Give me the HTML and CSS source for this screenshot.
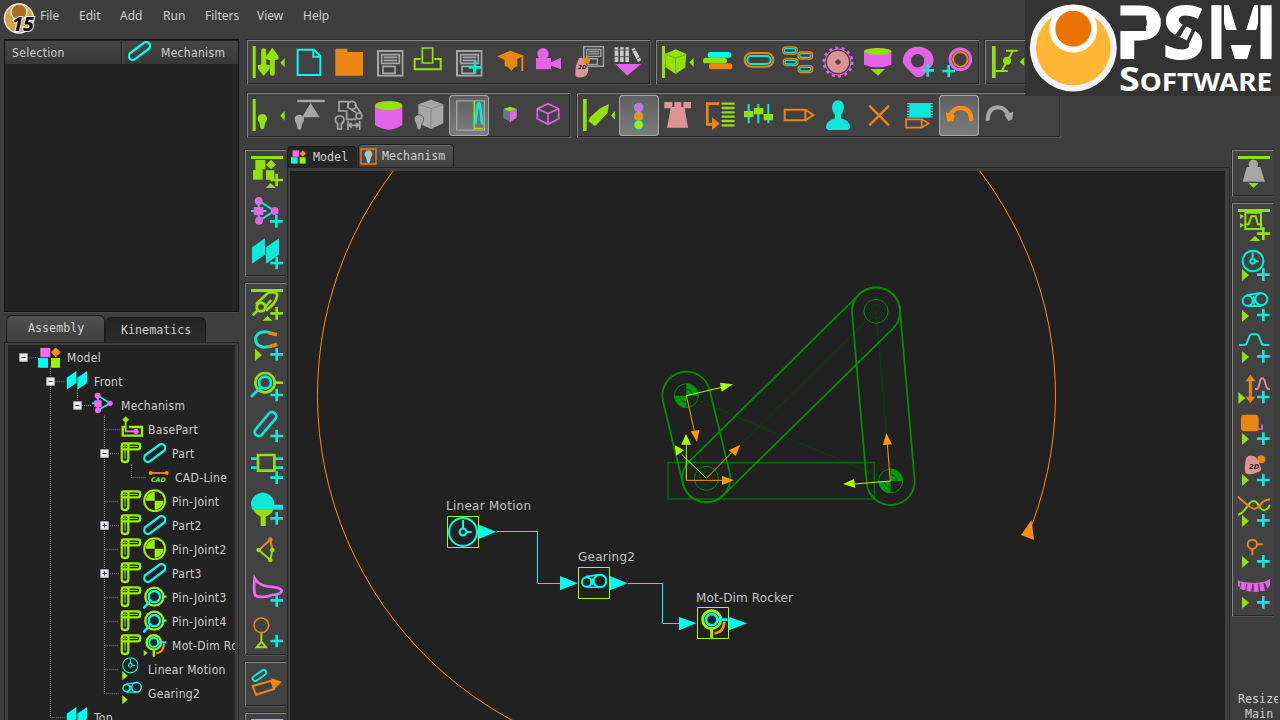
FILE: index.html
```html
<!DOCTYPE html>
<html lang="en">
<head>
<meta charset="utf-8">
<title>Mechanism</title>
<link rel="stylesheet" href="styles.css">
</head>
<body>
<svg class="defs" aria-hidden="true">
  <symbol id="plus" viewBox="-20 -20 40 40"><path class="sc" stroke-width="8" d="M-19 0H19M0-19V19"/></symbol>
  <symbol id="save" viewBox="0 0 80 80"><path class="sa" stroke-width="6" d="M3 3H77V77H3Z"/><path class="sa" stroke-width="5" d="M14 14H67V40H14ZM20 22H61M20 31H61M18 49H54V70H18Z"/></symbol>
  <symbol id="bulb" viewBox="0 0 30 48"><path class="fcur" d="M15 1A14 14 0 0 1 25 25Q22 30 21 42Q15 51 9 42Q8 30 5 25A14 14 0 0 1 15 1Z"/></symbol>
  <symbol id="planes" viewBox="0 0 64 60"><path class="fC" d="M1 22L30 2V38L1 58ZM33 22L62 2V38L33 58Z"/></symbol>
  <symbol id="fork" viewBox="0 0 64 64"><path class="sG" stroke-width="7" d="M10 4H52Q60 4 60 13Q60 22 52 22H24V50Q24 60 14 60Q4 60 4 50V12Q4 4 10 4ZM4 22H24M24 4V22"/><path class="sG" stroke-width="3" d="M8 13H52M14 8V50"/></symbol>
  <symbol id="part" viewBox="0 0 68 60"><rect class="sC" stroke-width="7" x="-3" y="18.500" width="74" height="23" rx="11.500" transform="rotate(-37 34 30)"/></symbol>
  <symbol id="pin" viewBox="0 0 70 70"><circle class="sG" stroke-width="6" cx="35" cy="35" r="31.500"/><path class="fG" d="M35 35V8A27 27 0 0 0 8 35ZM35 35V62A27 27 0 0 0 62 35Z"/></symbol>
  <symbol id="joint" viewBox="0 0 72 72"><circle class="sG" stroke-width="7" cx="35" cy="33" r="27"/><path class="sG" stroke-width="7" d="M62 33H72"/><circle class="sC" stroke-width="7" cx="35" cy="33" r="17"/><path class="sC" stroke-width="7" d="M23 46L2 68"/></symbol>
  <symbol id="clock" viewBox="0 0 90 90"><circle class="sC" stroke-width="6" cx="45" cy="45" r="41"/><path class="sC" stroke-width="6" d="M45 10V36M55 45H70"/><circle class="sC" stroke-width="6" cx="45" cy="45" r="10"/></symbol>
  <symbol id="gears" viewBox="0 0 80 44"><circle class="sC" stroke-width="6" cx="18" cy="25" r="14"/><circle class="sC" stroke-width="6" cx="58" cy="22" r="19"/><path class="sC" stroke-width="5" d="M16 9L56 3M18 41H58M34 15Q39 23 34 34"/></symbol>
  <symbol id="minus" viewBox="0 0 27 27"><path fill="#f2f2f2" stroke="#aaa" stroke-width="3" d="M2 2H25V25H2Z"/><path stroke="#446" stroke-width="3" d="M7 13.500H20"/></symbol>
  <symbol id="expand" viewBox="0 0 27 27"><path fill="#f2f2f2" stroke="#aaa" stroke-width="3" d="M2 2H25V25H2Z"/><path stroke="#347" stroke-width="3" d="M7 13.500H20M13.500 7V20"/></symbol>
  <symbol id="blocks" viewBox="0 0 68 62"><path class="fM" d="M7 1H37V30H7Z"/><path class="fC" d="M0 32H30V61H0Z"/><path class="fG" d="M39 32H66V61H39Z"/><path class="fO" d="M53 0L68 15L53 30L39 15Z"/></symbol>
  <symbol id="motdim" viewBox="0 0 80 90"><path class="sO" stroke-width="8" d="M71 40Q70 72 42 75"/><path class="sG" stroke-width="9" d="M33 60V88"/><circle class="sG" stroke-width="9" cx="33" cy="34" r="27"/><circle class="sC" stroke-width="8" cx="33" cy="34" r="17"/><path class="sC" stroke-width="8" d="M50 34H80"/></symbol>
  <symbol id="net" viewBox="0 0 96 86"><path class="sc" stroke-width="6" d="M0 43H46M23 12L71 43L24 72M23 12V72"/><path class="fm" d="M8 31H37V55H8Z"/><circle class="fm" cx="23" cy="13" r="12"/><circle class="fm" cx="71" cy="43" r="12"/><circle class="fm" cx="24" cy="72" r="12"/></symbol>
</svg>

<div class="app">
  <header class="menubar">
    <svg class="appicon" viewBox="0 0 34 36"><circle cx="17" cy="18.500" r="14.500" fill="#d2a23c" stroke="#eee9dc" stroke-width="1.500"/><circle cx="17" cy="12" r="8" fill="#b26c20" stroke="#f0e4cc" stroke-width="1.500"/><text x="10" y="31" class="ver" textLength="22" lengthAdjust="spacingAndGlyphs">15</text></svg>
    <nav><span class="m1">File</span><span class="m2">Edit</span><span class="m3">Add</span><span class="m4">Run</span><span class="m5">Filters</span><span class="m6">View</span><span class="m7">Help</span></nav>
  </header>

  <aside class="side">
    <section class="selection">
      <div class="selhead">
        <div class="cell">Selection</div>
        <div class="cell mech"><svg width="23" height="20"><use href="#part"/></svg><span>Mechanism</span></div>
      </div>
    </section>
    <div class="sidetabs"><div class="stab on">Assembly</div><div class="stab">Kinematics</div></div>
    <section class="treebox"><div class="tree">
      <div class="row"><svg width="59" height="24" viewBox="24 0 177 72"><path class="dot" d="M86 38H114M151 64V72"/><use href="#minus" x="57" y="24" width="27" height="27"/><use href="#blocks" x="114" y="7" width="68" height="62"/></svg>Model</div>
      <div class="row"><svg width="86" height="24" viewBox="24 0 258 72"><path class="dot" d="M151 0V72M166 38H196M232 64V72"/><use href="#minus" x="138" y="24" width="27" height="27"/><use href="#planes" x="199" y="4" width="64" height="60"/></svg>Front</div>
      <div class="row"><svg width="113" height="24" viewBox="24 0 339 72"><path class="dot" d="M151 0V72M232 0V24M246 38H276M313 68V72"/><use href="#minus" x="219" y="24" width="27" height="27"/><path class="sC" stroke-width="5" d="M276 31H300M294 8L330 31L294 52Z"/><path class="fM" d="M283 22H305V42H283Z"/><circle class="fM" cx="293" cy="8" r="9"/><circle class="fM" cx="330" cy="31" r="8"/><circle class="fM" cx="294" cy="52" r="9"/></svg>Mechanism</div>
      <div class="row"><svg width="140" height="24" viewBox="24 0 420 72"><path class="dot" d="M151 0V72M313 0V72M316 38H360"/><path class="sG" stroke-width="7" d="M377 30H368V56H426V30H388"/><path class="fG" d="M377-2L387 8L377 18L367 8Z"/><path class="sM" stroke-width="6" d="M376 43H404"/><circle class="fM" cx="408" cy="43" r="8"/><path class="sG" stroke-width="5" d="M377 10V44"/></svg>BasePart</div>
      <div class="row"><svg width="164" height="24" viewBox="24 0 492 72"><path class="dot" d="M151 0V72M313 0V72M330 38H358M394 70V72"/><use href="#minus" x="300" y="24" width="27" height="27"/><use href="#fork" x="361" y="3" width="64" height="64"/><use href="#part" x="430" y="6" width="68" height="60"/></svg>Part</div>
      <div class="row"><svg width="167" height="24" viewBox="24 0 501 72"><path class="dot" d="M151 0V72M313 0V72M394 0V38H440"/><path class="sO" stroke-width="5" d="M452 24H500"/><circle class="fO" cx="452" cy="24" r="6"/><circle class="fO" cx="500" cy="24" r="6"/><text class="cad" x="453" y="50" textLength="44" lengthAdjust="spacingAndGlyphs">CAD</text></svg>CAD-Line</div>
      <div class="row"><svg width="164" height="24" viewBox="24 0 492 72"><path class="dot" d="M151 0V72M313 0V72M316 38H358"/><use href="#fork" x="361" y="3" width="64" height="64"/><use href="#pin" x="429" y="0" width="70" height="70"/></svg>Pin-Joint</div>
      <div class="row"><svg width="164" height="24" viewBox="24 0 492 72"><path class="dot" d="M151 0V72M313 0V72M330 38H358"/><use href="#expand" x="300" y="24" width="27" height="27"/><use href="#fork" x="361" y="3" width="64" height="64"/><use href="#part" x="430" y="6" width="68" height="60"/></svg>Part2</div>
      <div class="row"><svg width="164" height="24" viewBox="24 0 492 72"><path class="dot" d="M151 0V72M313 0V72M316 38H358"/><use href="#fork" x="361" y="3" width="64" height="64"/><use href="#pin" x="429" y="0" width="70" height="70"/></svg>Pin-Joint2</div>
      <div class="row"><svg width="164" height="24" viewBox="24 0 492 72"><path class="dot" d="M151 0V72M313 0V72M330 38H358"/><use href="#expand" x="300" y="24" width="27" height="27"/><use href="#fork" x="361" y="3" width="64" height="64"/><use href="#part" x="430" y="6" width="68" height="60"/></svg>Part3</div>
      <div class="row"><svg width="164" height="24" viewBox="24 0 492 72"><path class="dot" d="M151 0V72M313 0V72M316 38H358"/><use href="#fork" x="361" y="3" width="64" height="64"/><use href="#joint" x="428" y="2" width="72" height="72"/></svg>Pin-Joint3</div>
      <div class="row"><svg width="164" height="24" viewBox="24 0 492 72"><path class="dot" d="M151 0V72M313 0V72M316 38H358"/><use href="#fork" x="361" y="3" width="64" height="64"/><use href="#joint" x="428" y="2" width="72" height="72"/></svg>Pin-Joint4</div>
      <div class="row"><svg width="164" height="24" viewBox="24 0 492 72"><path class="dot" d="M151 0V72M313 0V72M316 38H358"/><use href="#fork" x="361" y="3" width="64" height="64"/><use href="#motdim" x="434" y="1" width="66" height="72"/><path class="fG" d="M431 51L443 60L431 69Z"/></svg>Mot-Dim Rocker</div>
      <div class="row"><svg width="140" height="24" viewBox="24 0 420 72"><path class="dot" d="M151 0V72M313 0V72M316 38H358"/><use href="#clock" x="366" y="0" width="50" height="50"/><path class="fG" d="M367 42L383 56L367 70Z"/></svg>Linear Motion</div>
      <div class="row"><svg width="140" height="24" viewBox="24 0 420 72"><path class="dot" d="M151 0V72M313 0V38H358"/><use href="#gears" x="366" y="0" width="60" height="38"/><path class="fG" d="M367 42L383 56L367 70Z"/></svg>Gearing2</div>
      <div class="row"><svg width="86" height="24" viewBox="24 0 258 72"><path class="dot" d="M151 0V38H196"/><use href="#planes" x="199" y="4" width="64" height="60"/></svg>Top</div>
    </div></section>
  </aside>

  <main class="main">
    <div class="bar">
      <div class="group">
        <svg class="ic" viewBox="27 36 120 120"><path class="fg" d="M38 48H47V144H38Z"/><path class="sg" stroke-width="15" stroke-linecap="round" d="M71 62V115M97 75V130"/><path class="fg" d="M53 106Q71 100 90 106L89 116L71 138L54 116ZM78 88L79 78L97 53L115 78L116 88Q97 94 78 88ZM121 98L134 84V112Z"/></svg>
        <svg class="ic" viewBox="147 36 120 120"><path class="sC" stroke-width="6" d="M173 59H222L241 78V135H173ZM220 60V80H240"/></svg>
        <svg class="ic" viewBox="267 36 120 120"><path class="fo" d="M286 56H322V66H369V137H286Z"/></svg>
        <svg class="ic" viewBox="387 36 120 120"><use href="#save" x="411" y="60" width="80" height="80"/></svg>
        <svg class="ic" viewBox="507 36 120 120"><path class="sg" stroke-width="5" d="M547 54H578V99H547Z"/><path class="sg" stroke-width="6" d="M542 87H524V118H602V87H583"/></svg>
        <svg class="ic" viewBox="627 36 120 120"><use href="#save" x="648" y="60" width="80" height="80"/><use href="#plus" x="685" y="92" width="40" height="40"/></svg>
        <svg class="ic" viewBox="27 36 120 120"><path class="fo" d="M52 79L91 62L131 77L112 87V108Q100 112 94 123Q88 112 74 107V90Z"/><path class="so" stroke-width="6" d="M100 72L127 79V123"/></svg>
        <svg class="ic" viewBox="147 36 120 120"><circle class="fm" cx="189" cy="71" r="17"/><path class="fm" d="M168 84H213V97L243 83V118L213 107V118H168Z"/></svg>
        <svg class="ic" viewBox="267 36 120 120"><use href="#save" x="309" y="47" width="64" height="64"/><path fill="#db9595" d="M297 84Q310 80 314 95L325 115Q326 140 305 142Q288 144 286 136Q285 120 288 108Z"/><circle class="fo" cx="320" cy="91" r="10"/><text class="td" x="294" y="118">2D</text></svg>
        <svg class="ic" viewBox="387 36 120 120"><path fill="#c9c9c9" d="M404 52H415V96H404ZM420 52H431V96H420ZM436 52H447V96H436ZM454 58L464 53L484 91L474 96Z"/><path stroke="#555" stroke-width="3" fill="none" d="M404 60H447M404 80H447M457 64L468 59M472 86L482 81"/><path class="fm" d="M406 102H483L442 137Z"/></svg>
      </div>
      <div class="group">
        <svg class="ic" viewBox="534 36 120 120"><path class="fg" d="M546 48H555V144H546ZM555 72L587 58L619 72L616 112L587 132L557 112ZM628 97L641 84V111Z"/><path stroke="#57900c" stroke-width="2" fill="none" d="M557 74L587 84L617 74M587 84V130"/></svg>
        <svg class="ic" viewBox="654 36 120 120"><rect class="fC" x="683" y="66" width="71" height="17" rx="8"/><rect class="fg" x="669" y="83" width="72" height="17" rx="8"/><rect class="fo" x="687" y="100" width="70" height="18" rx="8"/></svg>
        <svg class="ic" viewBox="-6 36 120 120"><rect class="so" stroke-width="6" x="14" y="69" width="86" height="41" rx="20"/><rect class="sc" stroke-width="6" x="22" y="78" width="70" height="24" rx="12"/></svg>
        <svg class="ic" viewBox="114 36 120 120"><g class="so" stroke-width="4"><rect x="128" y="51" width="44" height="21" rx="10"/><rect x="174" y="66" width="44" height="21" rx="10"/><rect x="130" y="86" width="44" height="21" rx="10"/><rect x="174" y="107" width="44" height="21" rx="10"/></g><g class="sc" stroke-width="4"><rect x="133" y="56" width="34" height="11" rx="5"/><rect x="179" y="71" width="34" height="11" rx="5"/><rect x="135" y="91" width="34" height="11" rx="5"/><rect x="179" y="112" width="34" height="11" rx="5"/></g></svg>
        <svg class="ic" viewBox="234 36 120 120"><circle class="sm" cx="294" cy="96" r="39" stroke-width="3"/><circle class="sm" cx="294" cy="96" r="43" stroke-width="7" stroke-dasharray="9 10.300"/><circle fill="#db9595" cx="294" cy="96" r="33"/><circle fill="#444" stroke="#864d4d" stroke-width="3" cx="294" cy="96" r="7"/></svg>
        <svg class="ic" viewBox="354 36 120 120"><path class="fm" d="M372 64H454V104Q413 120 372 104Z"/><ellipse class="fg" cx="413" cy="64" rx="41" ry="10"/><path class="fg" d="M392 117H435L414 137Z"/></svg>
        <svg class="ic" viewBox="474 36 120 120"><path class="fm" fill-rule="evenodd" d="M534 50C570 50 590 82 577 106L548 138Q532 148 518 133C506 118 489 106 488 92C490 68 508 50 534 50ZM533 72A20 20 0 1 0 533.100 72Z"/><use href="#plus" x="543" y="101" width="40" height="40"/></svg>
        <svg class="ic" viewBox="594 36 120 120"><circle class="sm" stroke-width="9" cx="661" cy="88" r="31"/><circle class="so" stroke-width="6" cx="661" cy="88" r="22"/><use href="#plus" x="606" y="103" width="40" height="40"/></svg>
      </div>
      <div class="group wide">
        <svg class="ic" viewBox="741 36 120 120"><path class="fg" d="M756 48H767V144H756ZM839 95L853 82V109Z"/><path class="sg" stroke-width="6" d="M798 62H833M767 123H803M819 62L785 123"/><circle class="fg" cx="801" cy="92" r="12"/></svg>
      </div>
    </div>
    <div class="bar second">
      <div class="group">
        <svg class="ic" viewBox="27 195 120 120"><path class="fg" d="M38 207H47V303H38ZM121 257L134 243V272Z"/><use class="g" href="#bulb" x="52" y="251" width="30" height="48"/></svg>
        <svg class="ic" viewBox="147 195 120 120"><path class="sa" stroke-width="8" stroke-linecap="round" d="M175 213H251"/><path class="fa" d="M212 219L239 262H186Z"/><use class="a" href="#bulb" x="163" y="253" width="30" height="48"/></svg>
        <svg class="ic" viewBox="267 195 120 120"><path class="sa" stroke-width="5" d="M324 235V215H297V243H320V268H349M349 248L334 238M344 223L363 250"/><circle class="sa" stroke-width="5" cx="336" cy="226" r="12"/><circle class="sa" stroke-width="5" cx="357" cy="258" r="9"/><path class="sa" stroke-width="5" d="M299 258C315 258 315 274 304 282V297H293V282C282 274 284 258 299 258ZM324 272V300M359 272V300M326 286H357M335 279L327 286L335 293M348 279L356 286L348 293"/></svg>
        <svg class="ic" viewBox="387 195 120 120"><path class="fm" d="M405 227H487V285Q446 313 405 285Z"/><ellipse class="fg" cx="446" cy="227" rx="41" ry="14"/></svg>
        <svg class="ic" viewBox="507 195 120 120"><path class="fa" d="M535 223L573 209L610 223V280L573 297L535 280Z"/><path stroke="#777" stroke-width="2" fill="none" d="M537 224L573 236L609 224M573 236V294"/><use class="a" href="#bulb" x="522" y="253" width="30" height="48" stroke="#444" stroke-width="2"/></svg>
        <svg class="ic on" viewBox="627 195 120 120"><path class="sa" stroke-width="4" d="M650 211H733V299H650Z"/><path class="sg" stroke-width="5" d="M703 211V294H728"/><path class="sc" stroke-width="8" d="M700 278H706L713 222Q717 214 720 222L726 278H730"/></svg>
        <svg class="ic" viewBox="27 195 120 120"><path class="fg" d="M69 237L90 230L111 237L90 245Z"/><path fill="#687492" d="M69 237L90 245V277L70 263Z"/><path class="fm" d="M111 237L90 245V277L110 263Z"/></svg>
        <svg class="ic" viewBox="147 195 120 120"><path class="sm" stroke-width="5" d="M204 221L236 236V266L204 283L172 266V236ZM172 236L204 251L236 236M204 251V283"/></svg>
      </div>
      <div class="group last">
        <svg class="ic" viewBox="297 195 120 120"><path class="fg" d="M309 207H320V303H309ZM387 222L383 248L345 289L325 273L330 262L360 235ZM393 256L405 243V270Z"/></svg>
        <svg class="ic on" viewBox="417 195 120 120"><g class="sc" stroke-width="2"><circle class="fm" cx="476" cy="231" r="13"/><circle class="fO" cx="476" cy="257" r="13"/><circle class="fG" cx="476" cy="283" r="13"/></g></svg>
        <svg class="ic" viewBox="537 195 120 120"><path fill="#db9595" d="M553 216H577V231H583V216H604V231H610V216H633V235H614L624 293H561L572 235H553Z"/></svg>
        <svg class="ic" viewBox="657 195 120 120"><path class="so" stroke-width="8" d="M718 221H682V283H698"/><path class="fo" d="M696 262L719 281L696 301Z"/><path class="sg" stroke-width="7" stroke-linecap="round" d="M728 221H761M728 234H761M728 247H761M728 260H761M728 273H761M728 286H761"/></svg>
        <svg class="ic" viewBox="-3 195 120 120"><path class="sc" stroke-width="6" d="M26 222V280M55 222V280M85 222V280"/><path class="fg" d="M12 243H40V262H12ZM42 234H70V253H42ZM71 252H99V271H71Z"/></svg>
        <svg class="ic" viewBox="117 195 120 120"><path class="so" stroke-width="6" d="M134 239H196V271H134ZM196 239L220 255L196 271"/></svg>
        <svg class="ic" viewBox="237 195 120 120"><path class="fc" d="M294 211Q312 212 312 233Q311 245 303 254V265Q329 272 330 290Q330 300 318 300H270Q258 300 258 290Q260 272 285 265V254Q276 245 276 233Q277 212 294 211Z"/></svg>
        <svg class="ic" viewBox="357 195 120 120"><path class="so" stroke-width="7" d="M388 227L447 286M447 227L388 286"/></svg>
        <svg class="ic" viewBox="477 195 120 120"><path class="fc" d="M508 219H572V262H508Z"/><path class="sc" stroke-width="3.500" d="M501 221H579M501 229H579M501 237H579M501 245H579M501 253H579M501 261H579"/><path fill="#444" d="M495 264H570V296H495Z"/><path class="so" stroke-width="5" d="M498 268H545V293H498ZM545 268L566 280L545 293"/></svg>
        <svg class="ic on" viewBox="597 195 120 120"><path class="sO" stroke-width="13" d="M694 272Q694 232 659 232Q640 234 632 252"/><path class="fO" d="M617 245L644 254L640 272L622 273Z"/></svg>
        <svg class="ic" viewBox="717 195 120 120"><path class="sa" stroke-width="12" d="M743 272Q743 232 775 232Q794 234 804 252"/><path class="fa" d="M820 245L793 254L806 274L817 268Z"/></svg>
      </div>
    </div>

    <div class="work">
      <div class="strip">
        <div class="group v">
          <svg class="iv" viewBox="33 36 120 123"><path class="fg" d="M45 48H141V57H45ZM58 60H88V88H80V119H51V90H58ZM90 74L105 59L120 74L105 88ZM90 91H115V119H90ZM89 144L104 129L119 144Z"/><path class="sg" stroke-width="8" d="M103 120H141M122 101V139"/></svg>
          <svg class="iv" viewBox="33 159 120 123"><use href="#net" x="45" y="170" width="96" height="86"/><use href="#plus" x="101" y="224" width="40" height="40"/></svg>
          <svg class="iv" viewBox="33 282 120 123"><path class="fc" d="M48 322L87 295V344L48 371ZM90 322L129 295V344L90 371Z"/><use href="#plus" x="102" y="349" width="40" height="40"/></svg>
        </div>
        <div class="group v">
          <svg class="iv" viewBox="33 435 120 123"><path class="fg" d="M45 447H141V456H45ZM79 542L94 528L109 542Z"/><path class="sg" stroke-width="8" d="M50 526L66 510M60 492L95 460Q112 452 123 462Q126 472 112 492L90 512"/><path class="sg" stroke-width="7" d="M88 500L106 480"/><circle class="sg" stroke-width="9" cx="75" cy="501" r="13"/><path class="sg" stroke-width="8" d="M103 520H141M122 501V539"/></svg>
          <svg class="iv" viewBox="33 558 120 123"><path class="sc" stroke-width="9" d="M100 577C45 563 45 635 100 619"/><path class="so" stroke-width="11" d="M98 578L123 584M99 620L124 613"/><path class="fg" d="M57 626L78 645L57 663Z"/><use href="#plus" x="102" y="623" width="40" height="40"/></svg>
          <svg class="iv" viewBox="33 681 120 123"><circle class="sg" stroke-width="8" cx="87" cy="728" r="29"/><path class="sg" stroke-width="8" d="M114 728H141"/><circle class="sc" stroke-width="8" cx="87" cy="728" r="18"/><path class="sc" stroke-width="8" d="M74 742L45 771"/><use href="#plus" x="102" y="745" width="40" height="40"/></svg>
          <svg class="iv" viewBox="33 -36 120 123"><rect class="sc" stroke-width="8" x="45" y="0" width="86" height="25" rx="12" transform="rotate(-50 88 12)"/><use href="#plus" x="102" y="28" width="40" height="40"/></svg>
          <svg class="iv" viewBox="33 87 120 123"><path class="sc" stroke-width="8" d="M45 116H62M45 143H62M118 116H141M118 143H141"/><path class="sg" stroke-width="8" d="M66 105H115V152H66Z"/><use href="#plus" x="102" y="153" width="40" height="40"/></svg>
          <svg class="iv" viewBox="33 210 120 123"><path class="fg" d="M52 268H112Q107 284 89 290V318H74V290Q58 284 52 268Z"/><path class="fc" d="M49 269A35 35 0 1 1 115 254H141V269Z"/><use href="#plus" x="102" y="275" width="40" height="40"/></svg>
          <svg class="iv" viewBox="33 333 120 123"><path class="so" stroke-width="6" d="M68 390L103 359L109 390"/><path class="sg" stroke-width="6" d="M68 390L103 420L109 390"/><circle class="fo" cx="103" cy="359" r="7"/><g class="fg"><circle cx="68" cy="390" r="7"/><circle cx="109" cy="390" r="7"/><circle cx="103" cy="420" r="7"/></g></svg>
          <svg class="iv" viewBox="33 456 120 123"><path class="sM" stroke-width="8" d="M56 475Q68 496 95 499Q134 502 137 511Q138 524 108 525Q90 534 64 529Q50 530 56 475Z"/><use href="#plus" x="102" y="521" width="40" height="40"/></svg>
          <svg class="iv" viewBox="33 579 120 123"><circle class="so" stroke-width="5" cx="76" cy="616" r="22"/><path class="sg" stroke-width="6" d="M76 640V666L62 682H90L76 664"/><use href="#plus" x="102" y="643" width="40" height="40"/></svg>
        </div>
        <div class="group v">
          <svg class="iv" viewBox="33 732 120 123"><rect class="sc" stroke-width="6" x="47" y="759" width="46" height="15" rx="7" transform="rotate(-35 70 766)"/><path class="so" stroke-width="6" d="M50 798L106 782L114 807L60 824Z"/><path class="fo" d="M105 774L138 785L114 808Z"/></svg>
        </div>
        <div class="group v"><svg class="iv" viewBox="33 885 120 123"><path class="fg" d="M45 897H141V906H45Z"/></svg></div>
      </div>

      <section class="doc">
        <div class="doctabs">
          <div class="dtab"><svg width="15" height="14"><use href="#blocks"/></svg>Model</div>
          <div class="dtab on"><svg width="17" height="17" viewBox="0 0 51 51"><path class="so" stroke-width="4" d="M3 3H48V48H3Z"/><use class="w" href="#bulb" x="13" y="6" width="25" height="40"/></svg>Mechanism</div>
        </div>
        <div class="frame">
          <svg class="canvas" viewBox="290 171 935 549">
            <path class="orbit" d="M1032 524.600A369 369 0 1 0 590 751.200"/>
            <path fill="#ff8e0c" d="M1031.500 520L1021 535L1034 540Z"/>
            <g transform="translate(430 270) scale(.333333)">
              <g class="dim"><path d="M769 377L1382 633M769 377L829 625M829 625L1338 124L1382 633"/></g>
              <path class="base" d="M714 578H1333V687H714Z"/>
              <g class="link">
                <rect x="-72" y="-72" width="399" height="144" rx="72" transform="translate(769 377) rotate(76.400)"/>
                <rect x="-72" y="-72" width="858" height="144" rx="72" transform="translate(829 625) rotate(-44.500)"/>
                <rect x="-72" y="-72" width="655" height="144" rx="72" transform="translate(1338 124) rotate(85.060)"/>
              </g>
              <g class="ring"><circle cx="769" cy="377" r="36"/><circle cx="829" cy="625" r="36"/><circle cx="1338" cy="124" r="36"/><circle cx="1382" cy="633" r="36"/></g>
              <path fill="#049804" d="M769 377V341A36 36 0 0 1 805 377ZM769 377V413A36 36 0 0 1 733 377ZM1382 633V597A36 36 0 0 1 1418 633ZM1382 633V669A36 36 0 0 1 1346 633Z"/>
              <g class="dim"><circle cx="769" cy="377" r="19"/><circle cx="829" cy="625" r="19"/><circle cx="1338" cy="124" r="20"/><circle cx="1382" cy="633" r="19"/></g>
              <g class="axg"><path d="M769 377L875 352M829 625L755 553M769 631V523M1382 633L1274 642"/><path class="head" d="M870 338L909 343L875 365ZM734 525L762 541L739 557ZM768 491L783 524H754ZM1239 642L1272 627L1276 654Z"/></g>
              <g class="axo"><path d="M769 377L793 482M829 625L908 545M769 631H878M1381 633L1372 522"/><path class="head" d="M782 484L808 480L801 516ZM896 541L931 524L917 558ZM876 618L912 631L876 645ZM1369 489L1386 523L1359 525Z"/></g>
              <g class="wire"><path d="M201 784.500H322.500V940.500H392M594 940.500H697.500V1060.500H748"/><path class="head" d="M147 764L198 785L147 807ZM390 918L443 940L390 961ZM540 918L592 940L540 961ZM747 1041L799 1060L747 1081ZM897 1041L951 1060L897 1081Z"/></g>
              <path class="node" d="M52.500 739.500H145.500V832.500H52.500ZM445.500 892.500H538.500V985.500H445.500ZM802.500 1012.500H895.500V1105.500H802.500Z"/>
              <use href="#clock" x="53" y="740" width="92" height="92"/>
              <use href="#gears" x="452" y="911" width="80" height="44"/>
              <use href="#motdim" x="808" y="1015" width="88" height="90"/>
            </g>
            <g class="cap"><text x="446" y="509.500" textLength="85">Linear Motion</text><text x="578" y="560.500" textLength="57">Gearing2</text><text x="696" y="601.500" textLength="97">Mot-Dim Rocker</text></g>
          </svg>
        </div>
      </section>

      <div class="strip right">
        <div class="group v first">
          <svg class="iv" viewBox="102 36 120 123"><path class="fg" d="M114 48H210V57H114ZM145 129H176L160 144Z"/><circle class="fa" cx="160" cy="73" r="14"/><path class="fa" d="M140 81H181L195 125H128Z"/></svg>
        </div>
        <div class="group v">
          <svg class="iv" viewBox="102 195 120 123"><path class="fg" d="M114 207H210V216H114ZM120 222L132 229L120 237ZM120 248L132 256L120 263ZM149 303L165 288L181 303Z"/><path class="sg" stroke-width="6" d="M136 218H183V267H136ZM139 253H146L154 229H167L174 253H181"/><path class="sg" stroke-width="8" d="M171 281H210M190 262V300"/></svg>
          <svg class="iv" viewBox="102 318 120 123"><g class="sc" stroke-width="6"><circle cx="159" cy="363" r="31"/><circle cx="158" cy="364" r="7"/><path d="M158 337V356M166 364H176"/></g><path class="fg" d="M126 387L147 405L126 423Z"/><use href="#plus" x="170" y="384" width="40" height="40"/></svg>
          <svg class="iv" viewBox="102 441 120 123"><g class="sc" stroke-width="6"><circle cx="143" cy="482" r="15"/><circle cx="184" cy="478" r="18"/><path d="M139 466L182 459M143 498H184M160 469Q165 480 160 494"/></g><path class="fg" d="M126 510L147 528L126 546Z"/><use href="#plus" x="170" y="505" width="40" height="40"/></svg>
          <svg class="iv" viewBox="102 564 120 123"><path class="sc" stroke-width="6" d="M117 615H134Q140 613 142 605L148 590Q151 583 155 583H170Q174 583 177 590L183 605Q185 613 191 615H208"/><path class="fg" d="M126 633L147 651L126 669Z"/><use href="#plus" x="170" y="629" width="40" height="40"/></svg>
          <svg class="iv" viewBox="102 687 120 123"><path class="so" stroke-width="9" d="M151 715V778"/><path class="fo" d="M137 724L151 704L166 724ZM137 770L151 789L166 770Z"/><path stroke="#db8d8d" fill="none" stroke-width="6" d="M165 747H171Q176 745 177 736L181 720Q187 708 193 720L198 736Q199 745 204 747H210"/><path class="fg" d="M115 756L136 774L115 792Z"/><use href="#plus" x="170" y="751" width="40" height="40"/></svg>
          <svg class="iv" viewBox="102 -30 120 123"><rect class="fo" x="123" y="-16" width="53" height="50" rx="10"/><path class="sm" stroke-width="5" d="M172 27H186V14"/><path class="fg" d="M126 39L147 57L126 75Z"/><use href="#plus" x="170" y="36" width="40" height="40"/></svg>
          <svg class="iv" viewBox="102 93 120 123"><path fill="#db9595" d="M145 108Q168 105 175 123L184 147Q182 157 160 161Q140 167 135 155Q133 140 138 115Z"/><circle class="fo" cx="184" cy="118" r="12"/><text class="td big" x="147" y="148">2D</text><path class="fg" d="M126 162L147 180L126 198Z"/><use href="#plus" x="170" y="160" width="40" height="40"/></svg>
          <svg class="iv" viewBox="102 216 120 123"><path class="sg" stroke-width="6" d="M114 284C138 280 144 243 160 243C176 243 178 271 192 271Q202 270 210 255"/><path class="so" stroke-width="6" d="M114 230C145 258 155 267 164 266Q174 264 184 250Q193 240 210 238"/><path class="fg" d="M126 285L147 303L126 321Z"/><use href="#plus" x="170" y="281" width="40" height="40"/></svg>
          <svg class="iv" viewBox="102 339 120 123"><circle class="so" stroke-width="6" cx="157" cy="373" r="14"/><path class="so" stroke-width="6" d="M172 373H188M157 388V406"/><path class="fg" d="M126 408L147 426L126 444Z"/><use href="#plus" x="170" y="404" width="40" height="40"/></svg>
          <svg class="iv" viewBox="102 462 120 123"><path class="fm" d="M114 479L121 488L119 502L114 498ZM125 485L139 487L136 511L120 507ZM142 488L157 490L154 515L139 512ZM161 491L174 490L176 515L161 516ZM178 489L190 487L195 512L180 514ZM193 486L210 477V495L203 507Z"/><path class="sm" stroke-width="4" d="M116 485Q162 497 208 484"/><path class="fg" d="M126 530L147 548L126 566Z"/><use href="#plus" x="170" y="527" width="40" height="40"/></svg>
        </div>
        <div class="resize">Resiz<span>e</span><br>&nbsp;Main</div>
      </div>
    </div>
  </main>

  <div class="logo">
    <svg width="255" height="96" viewBox="1025 0 255 96">
      <circle cx="1073.300" cy="48" r="43.500" fill="#f4f4f6"/><circle cx="1073.300" cy="48" r="37.300" fill="#ffb633"/><circle cx="1073.300" cy="28.700" r="24" fill="#fff"/><circle cx="1073.300" cy="28.700" r="18" fill="#ec7404"/>
      <g class="psm"><text x="1114" y="59" textLength="50" lengthAdjust="spacingAndGlyphs">P</text><text x="1162" y="59" textLength="43" lengthAdjust="spacingAndGlyphs">S</text><text x="1205" y="59" textLength="73" lengthAdjust="spacingAndGlyphs">M</text></g>
      <path fill="#333" d="M1119 15.500H1146V31H1119ZM1175 35L1187 19L1190 20L1180 37ZM1184 46L1193 27L1196 29L1188 46ZM1221.500 0H1224V60H1221.500ZM1258 0H1260.500V60H1258ZM1224 30H1258V45H1224Z"/>
      <text class="soft" x="1119" y="91" textLength="153" lengthAdjust="spacingAndGlyphs"><tspan class="bigs">S</tspan>OFTWARE</text>
    </svg>
  </div>
</div>
</body>
</html>
```
FILE: styles.css
```css
* { box-sizing: border-box; }
body { margin: 0; background: #3e3e3e; color: #cfcfcf; font: 12px "DejaVu Sans Condensed", "DejaVu Sans", sans-serif; }
svg { display: block; flex: none; }
.defs { position: absolute; width: 0; height: 0; }
.app { position: relative; width: 1280px; height: 720px; overflow: hidden; display: grid; grid-template: 39px 681px / 244px 1036px; }

/* palette: lower case = toolbar tone, upper case = bright tone */
.fg { fill: #93e00a; } .fG { fill: #9df000; } .fc { fill: #0fe8d8; } .fC { fill: #00fff0; }
.fo { fill: #ea8612; } .fO { fill: #ff8e0c; } .fm { fill: #e463e8; } .fM { fill: #f468fa; } .fa { fill: #a6a6a6; }
.sg, .sG, .sc, .sC, .so, .sO, .sm, .sM, .sa { fill: none; }
.sg { stroke: #93e00a; } .sG { stroke: #9df000; } .sc { stroke: #0fe8d8; } .sC { stroke: #00fff0; }
.so { stroke: #ea8612; } .sO { stroke: #ff8e0c; } .sm { stroke: #e463e8; } .sM { stroke: #f468fa; } .sa { stroke: #a6a6a6; }
.fcur { fill: currentColor; }
.g { color: #93e00a; } .a { color: #a6a6a6; } .w { color: #bdbdbd; }

.menubar { grid-column: 1 / 3; display: flex; font: 12px "Noto Sans", sans-serif; }
.appicon { width: 34px; height: 36px; margin-left: 2px; }
.ver { font: italic 800 19px "Noto Sans", sans-serif; fill: #111; stroke: #eee; stroke-width: 2px; paint-order: stroke; }
nav { display: flex; padding-left: 4px; line-height: 32px; }
.m1 { width: 39px; } .m2 { width: 41px; } .m3 { width: 43px; } .m4 { width: 42px; } .m5 { width: 52px; } .m6 { width: 46px; }

.side { display: flex; flex-direction: column; padding: 0 5px 0 4px; min-width: 0; letter-spacing: .32px; }
.selection { height: 273px; flex: none; background: #222; border: 1px solid #141414; box-shadow: 0 1px #4a4a4a; }
.selhead { display: flex; height: 24px; padding-top: 1px; }
.cell { width: 117px; padding-left: 7px; line-height: 24px; background: linear-gradient(#474747, #383838); border-right: 1px solid #1b1b1b; }
.mech { flex: 1; display: flex; border: 0; padding-left: 5px; border-left: 1px solid #555; }
.mech span { margin-left: 10px; }
.sidetabs { display: flex; align-items: flex-end; height: 30px; padding-left: 2px; flex: none; font: 11.700px "DejaVu Sans Mono", monospace; letter-spacing: 0; }
.stab { height: 25px; width: 101px; padding-left: 15px; line-height: 24px; background: linear-gradient(#232323, #2b2b2b); border: 1px solid #1a1a1a; border-bottom: 0; border-radius: 6px 6px 0 0; }
.stab.on { height: 27px; width: 99px; padding-left: 21px; line-height: 24px; background: linear-gradient(#505050, #3e3e3e); }
.treebox { flex: 1; min-height: 0; border: 1px solid #262626; border-bottom: 0; padding: 2px 3px 0; }
.tree { height: 100%; background: #222; overflow: hidden; }
.row { display: flex; height: 24px; line-height: 26px; white-space: nowrap; }
.row svg { overflow: visible; }
.dot { fill: none; stroke: #8a8a8a; stroke-width: 3; stroke-dasharray: 3 3; }
.cad { font: italic bold 19px "DejaVu Sans", sans-serif; fill: #9df000; letter-spacing: 0; }

.main { min-width: 0; }
.bar { display: flex; gap: 4px; padding-left: 2px; height: 53px; }
.second { gap: 5px; }
.group { display: flex; height: 46px; background: #424242; border: 1px solid; border-color: #2b2b2b #555 #555 #2b2b2b; box-shadow: inset 1px 1px #868686, inset -1px -1px #262626; padding: 2px 1px 2px 2px; flex: none; }
.group.wide { width: 120px; }
.group.last { width: 485px; }
.ic { width: 40px; height: 40px; }
.ic.on { height: 41px; background: linear-gradient(#606060, #7c7c7c); border-radius: 4px; box-shadow: inset 0 0 0 1px #a8a8a8; }
.td { font: italic bold 17px "DejaVu Sans", sans-serif; fill: #332222; }
.td.big { font-size: 20px; }

.work { display: flex; height: 575px; }
.strip { width: 42px; padding-top: 4px; display: flex; flex-direction: column; gap: 5px; overflow: hidden; }
.group.v { height: auto; flex-direction: column; width: 45px; padding: 2px 1px 1px 2px; }
.iv { width: 40px; height: 41px; }
.right { width: 47px; margin-left: 1px; gap: 5px; }
.right .group { width: 42px; border-right: 0; box-shadow: inset 1px 1px #868686, inset 0 -1px #262626; }
.right .first { padding-bottom: 3px; }
.right .iv { margin-right: -4px; }
.resize { margin: 70px 0 0 7px; font: 11.700px/15px "DejaVu Sans Mono", monospace; white-space: nowrap; }
.resize span { display: inline-block; width: 5px; overflow: hidden; vertical-align: bottom; }

.doc { width: 943px; margin-left: 1px; display: flex; flex-direction: column; }
.doctabs { height: 22px; display: flex; align-items: flex-end; font: 11.700px "DejaVu Sans Mono", monospace; padding-left: 0; }
.dtab { display: flex; align-items: center; gap: 7px; width: 70px; height: 21px; padding-left: 3px; background: #262626; border: 1px solid #1d1d1d; border-bottom: 0; border-radius: 4px 4px 0 0; }
.dtab.on { width: 96px; height: 23px; gap: 5px; padding-left: 1px; margin-left: 1px; background: linear-gradient(#525252, #404040); border-color: #1d1d1d; box-shadow: inset 0 1px #666; }
.frame { flex: 1; border: 1px solid #262626; border-bottom: 0; padding: 3px 3px 0 2px; }
.canvas { width: 935px; height: 549px; background: #212121; }
.orbit { fill: none; stroke: #ff8e0c; stroke-width: 1; }
.dim { fill: none; stroke: #034503; stroke-width: 3; }
.base { fill: none; stroke: #056805; stroke-width: 5; }
.link { fill: none; stroke: #068c06; stroke-width: 5.500; }
.ring { fill: none; stroke: #068c06; stroke-width: 3; }
.axg { fill: none; stroke: #a8ff00; stroke-width: 3; } .axg .head { fill: #a8ff00; stroke: none; }
.axo { fill: none; stroke: #ff9612; stroke-width: 3; } .axo .head { fill: #ff9612; stroke: none; }
.wire { fill: none; stroke: #00fff0; stroke-width: 3; } .wire .head { fill: #00fff0; stroke: none; }
.node { fill: none; stroke: #a8ff00; stroke-width: 3; }
.cap { font: 12px "DejaVu Sans", sans-serif; fill: #c4c4c4; }

.logo { position: absolute; left: 1025px; top: 0; background: #333; }
.psm { font: 800 75px "Noto Sans", sans-serif; fill: #fff; }
.soft { font: bold 25px "Noto Sans", sans-serif; fill: #fff; }
.bigs { font-size: 34px; }
```
